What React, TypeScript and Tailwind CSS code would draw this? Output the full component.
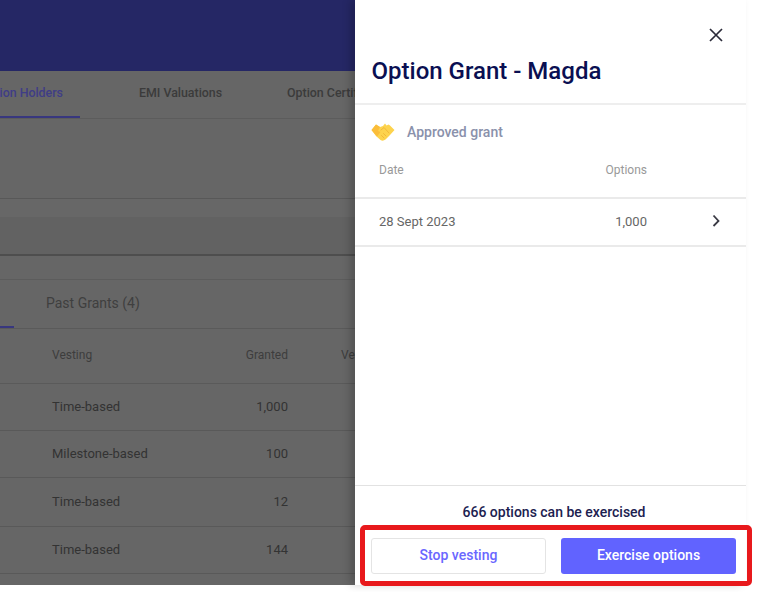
import React from "react";

const rows = [
  { label: "Time-based", granted: "1,000", h: "h-[47px]" },
  { label: "Milestone-based", granted: "100", h: "h-[47px]" },
  { label: "Time-based", granted: "12", h: "h-[49px]" },
  { label: "Time-based", granted: "144", h: "h-[47px]" },
];

function Handshake() {
  return (
    <svg width="24" height="20" viewBox="0 0 24 20" aria-hidden="true">
      <path d="M0.5 8 L5 2.5 L9 5 L12 4 L14 1.5 L15.5 3.5 L17.5 2.5 L19 3.5 L23.5 8 L19 13 L14.5 17.5 Q12 19.5 9.5 18 L5 14 Z" fill="#fdd34e" />
      <path d="M0.5 8 L5 2.5 L9 5 L7 9 L9.5 10 L6 14.5 Z" fill="#fbbd3a" />
      <path d="M10 8 L13 5.5 L18 11 M12.5 11.5 L15 14 M10.5 13.5 L13 16" fill="none" stroke="#f0b437" strokeWidth="0.9" strokeLinecap="round" />
    </svg>
  );
}

export default function App() {
  return (
    <div className="relative flex w-[772px] h-[592px] overflow-hidden bg-white font-['Roboto',sans-serif]">
      <div className="w-[355px] h-[585px] shrink-0 overflow-hidden bg-[#666666] flex flex-col">
        <div className="h-[71px] shrink-0 bg-[#252765]" />
        <div className="h-[48px] shrink-0 border-b border-[#5c5c5c] flex text-[12.4px] leading-[16px] font-medium whitespace-nowrap">
          <div className="w-[80px] shrink-0 h-[47px] border-b-2 border-[#38377f] flex justify-end pt-[14px] pr-[17px] overflow-hidden text-[#3f3d86]">
            <span>Option Holders</span>
          </div>
          <div className="ml-[59px] w-[148px] shrink-0 pt-[14px] text-[#3b3b3b]">EMI Valuations</div>
          <div className="pt-[14px] text-[#3b3b3b]">Option Certificates</div>
        </div>
        <div className="h-[80px] shrink-0 border-b border-[#585858]" />
        <div className="h-[18px] shrink-0 bg-[#676767]" />
        <div className="h-[39px] shrink-0 bg-[#626262] border-b-2 border-[#4e4e4e]" />
        <div className="h-[24px] shrink-0 border-b border-[#5c5c5c]" />
        <div className="h-[49px] shrink-0 border-b border-[#5a5a5a] flex items-stretch whitespace-nowrap">
          <div className="w-[14px] h-[48px] border-b-2 border-[#38377f]" />
          <div className="ml-[32px] pb-[2px] flex items-center text-[14px] text-[#3f3f3f]">Past Grants (4)</div>
        </div>
        <div className="h-[55px] shrink-0 border-b border-[#5a5a5a] flex items-center pl-[52px] pb-[3px] text-[12px] text-[#3d3d3d] whitespace-nowrap">
          <span className="w-[190px] shrink-0">Vesting</span>
          <span className="w-[46px] shrink-0 text-right">Granted</span>
          <span className="ml-[53px] shrink-0">Vested</span>
        </div>
        {rows.map((r, i) => (
          <div key={i} className={`${r.h} shrink-0 border-b border-[#595959] flex items-center pl-[52px] text-[13px] text-[#333333] whitespace-nowrap`}>
            <span className="w-[190px] shrink-0">{r.label}</span>
            <span className="w-[46px] shrink-0 text-right">{r.granted}</span>
          </div>
        ))}
      </div>

      <div className="relative w-[391px] h-[585px] shrink-0 bg-white flex flex-col shadow-[-5px_0_8px_rgba(0,0,0,0.18)]">
        <div className="h-[105px] shrink-0 border-b-2 border-[#eeeeee] relative">
          <button className="absolute left-[351px] top-[25px] text-[#2b2b3a]" aria-label="Close">
            <svg width="20" height="20" viewBox="0 0 20 20" fill="none" stroke="currentColor" strokeWidth="1.7">
              <path d="M4 4 L16 16 M16 4 L4 16" />
            </svg>
          </button>
          <h1 className="absolute left-[16.5px] top-[57px] text-[24px] leading-[28px] font-medium text-[#0a0f52] whitespace-nowrap">Option Grant - Magda</h1>
        </div>
        <div className="h-[38px] shrink-0 flex items-center pl-[16px] pt-[16px]">
          <Handshake />
          <span className="ml-[12px] text-[14px] font-medium text-[#8a91ab]">Approved grant</span>
        </div>
        <div className="h-[56px] shrink-0 border-b-2 border-[#eaeaea] flex items-start pt-[19px] pl-[24px] text-[12px] leading-[16px] text-[#999999]">
          <span className="w-[268px]">Date</span>
          <span className="w-[0px] flex justify-end whitespace-nowrap">Options</span>
        </div>
        <div className="h-[48px] shrink-0 border-b-2 border-[#eaeaea] flex items-center pl-[24px] text-[13px] text-[#666666]">
          <span className="w-[268px]">28 Sept 2023</span>
          <span className="w-[0px] flex justify-end">1,000</span>
          <svg className="ml-[61px] mb-[2px]" width="16" height="16" viewBox="0 0 16 16" fill="none" stroke="#3a3a44" strokeWidth="1.8">
            <path d="M5.5 2.5 L10.5 8 L5.5 13" />
          </svg>
        </div>
        <div className="flex-1" />
        <div className="h-[100px] shrink-0 border-t border-[#e2e2e2] flex flex-col">
          <p className="h-[52px] shrink-0 pt-[17px] pl-[7px] text-center text-[14px] leading-[18px] font-medium text-[#1c2150]">666 options can be exercised</p>
          <div className="flex gap-[15px] pl-[16px]">
            <button className="w-[175px] h-[36px] pb-[2px] rounded-[3px] border border-[#e4e4e4] bg-white text-[14px] font-medium text-[#6a67ff]">Stop vesting</button>
            <button className="w-[175px] h-[36px] pb-[2px] rounded-[3px] bg-[#6163ff] text-[14px] font-medium text-white">Exercise options</button>
          </div>
        </div>
      </div>

      <div className="absolute left-[360px] top-[525px] w-[392px] h-[61px] border-[5px] border-[#e8191c] rounded-[5px]" />
    </div>
  );
}
